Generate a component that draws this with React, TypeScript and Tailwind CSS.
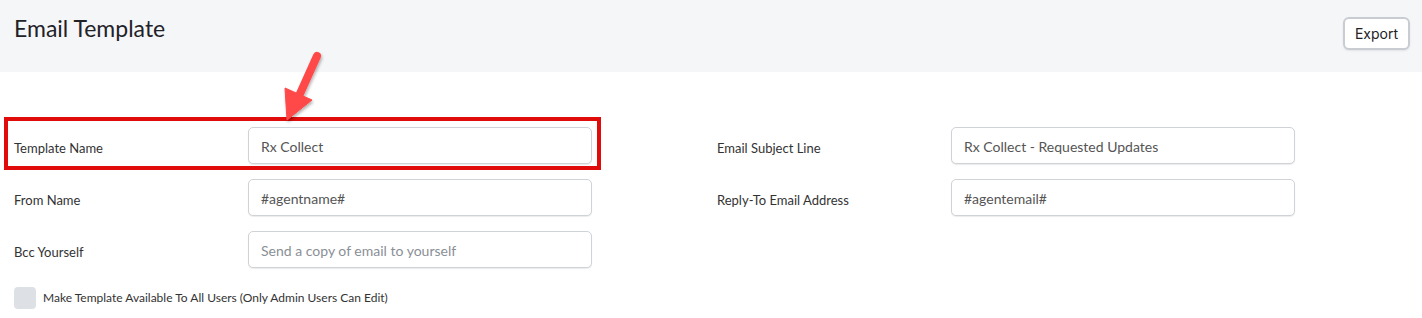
import React from 'react';

const font = { fontFamily: 'Lato, "Noto Sans", sans-serif' };

const Field = ({ label, value, placeholder }: { label: string; value?: string; placeholder?: string }) => (
  <div className="flex items-center h-[37px]">
    <label className="w-[234px] shrink-0 text-[13px] text-[#333] pt-[6px]">{label}</label>
    <input
      readOnly
      value={value ?? ''}
      placeholder={placeholder}
      className="w-[344px] h-[37px] rounded-[5px] border border-[#cfd2d6] bg-white px-3 pt-[1px] text-[14px] text-[#555] placeholder:text-[#8a8f96] shadow-[0_1px_1px_rgba(0,0,0,0.08)] outline-none"
    />
  </div>
);

export default function App() {
  return (
    <div className="relative w-[1422px] h-[318px] bg-white overflow-hidden" style={font}>
      <div className="flex items-start justify-between h-[72px] bg-[#f5f6f8] pl-[14px] pr-[12px]">
        <h1 className="mt-[11px] text-[23px] text-[#1f2328]">Email Template</h1>
        <button
          className="mt-[17px] h-[33px] w-[67px] rounded-[6px] border-2 border-[#c9cdd3] bg-white text-[14px] text-[#222] shadow-[0_1px_2px_rgba(0,0,0,0.08)]"
          style={{ fontFamily: 'Inter, "Liberation Sans", sans-serif' }}
        >
          Export
        </button>
      </div>

      <div className="flex gap-[125px] pl-[14px] pt-[55px]">
        <div className="flex flex-col gap-[15px]">
          <Field label="Template Name" value="Rx Collect" />
          <Field label="From Name" value="#agentname#" />
          <Field label="Bcc Yourself" placeholder="Send a copy of email to yourself" />
        </div>
        <div className="flex flex-col gap-[15px]">
          <Field label="Email Subject Line" value="Rx Collect - Requested Updates" />
          <Field label="Reply-To Email Address" value="#agentemail#" />
        </div>
      </div>

      <div className="flex items-center gap-[7px] pl-[14px] mt-[19px]">
        <span className="w-[22px] h-[22px] rounded-[4px] bg-[#dde1e6]" />
        <span className="text-[12px] text-[#333]">Make Template Available To All Users (Only Admin Users Can Edit)</span>
      </div>

      {/* annotation overlay */}
      <div className="absolute left-[4px] top-[117px] w-[597px] h-[53px] border-[4px] border-[#e00b0b] pointer-events-none" />
      <svg className="absolute left-0 top-0 pointer-events-none" width="1422" height="318">
        <defs>
          <filter id="sh" x="-50%" y="-50%" width="200%" height="200%">
            <feDropShadow dx="1" dy="2" stdDeviation="1.5" floodColor="#000" floodOpacity="0.3" />
          </filter>
        </defs>
        <g filter="url(#sh)" fill="#ff4848" stroke="#ff4848">
          <line x1="317" y1="56" x2="299" y2="96" strokeWidth="8" strokeLinecap="round" />
          <polygon points="287,120 285,88 312,100" strokeWidth="1" strokeLinejoin="round" />
        </g>
      </svg>
    </div>
  );
}
